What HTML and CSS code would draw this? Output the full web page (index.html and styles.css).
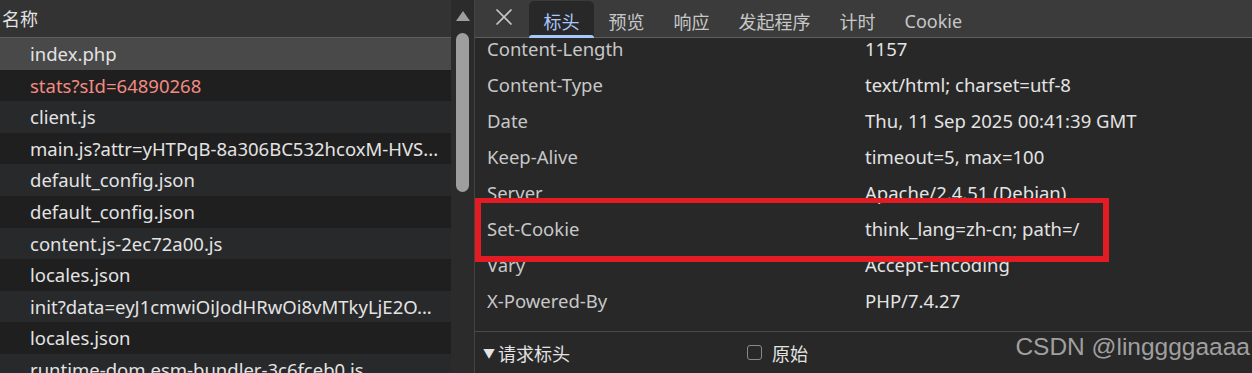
FILE: index.html
```html
<!DOCTYPE html>
<html lang="zh-CN">
<head>
<meta charset="utf-8">
<title>Network</title>
<link rel="stylesheet" href="styles.css">
</head>
<body>
<div class="app">
  <div class="left">
    <div class="list">
      <div class="list-head">名称</div>
      <div class="row selected">index.php</div>
      <div class="row dark error">stats?sId=64890268</div>
      <div class="row light">client.js</div>
      <div class="row dark">main.js?attr=yHTPqB-8a306BC532hcoxM-HVS...</div>
      <div class="row light">default_config.json</div>
      <div class="row dark">default_config.json</div>
      <div class="row light">content.js-2ec72a00.js</div>
      <div class="row dark">locales.json</div>
      <div class="row light">init?data=eyJ1cmwiOiJodHRwOi8vMTkyLjE2O...</div>
      <div class="row dark">locales.json</div>
      <div class="row light">runtime-dom.esm-bundler-3c6fceb0.js</div>
    </div>
    <div class="scrollbar">
      <div class="arrow"></div>
      <div class="thumb"></div>
    </div>
  </div>
  <div class="right">
    <div class="tabbar">
      <div class="close">
        <svg width="18" height="16" viewBox="0 0 18 16"><path d="M1.5 0.5 L16.5 15.5 M16.5 0.5 L1.5 15.5" stroke="#c7c7c7" stroke-width="1.6" fill="none"/></svg>
      </div>
      <div class="tab active">标头</div>
      <div class="tab">预览</div>
      <div class="tab">响应</div>
      <div class="tab">发起程序</div>
      <div class="tab">计时</div>
      <div class="tab">Cookie</div>
    </div>
    <div class="headers-view">
      <div class="headers">
        <div class="hrow"><span class="hname">Content-Length</span><span class="hval">1157</span></div>
        <div class="hrow"><span class="hname">Content-Type</span><span class="hval">text/html; charset=utf-8</span></div>
        <div class="hrow"><span class="hname">Date</span><span class="hval">Thu, 11 Sep 2025 00:41:39 GMT</span></div>
        <div class="hrow"><span class="hname">Keep-Alive</span><span class="hval">timeout=5, max=100</span></div>
        <div class="hrow"><span class="hname">Server</span><span class="hval">Apache/2.4.51 (Debian)</span></div>
        <div class="hrow"><span class="hname">Set-Cookie</span><span class="hval">think_lang=zh-cn; path=/</span></div>
        <div class="hrow"><span class="hname">Vary</span><span class="hval">Accept-Encoding</span></div>
        <div class="hrow"><span class="hname">X-Powered-By</span><span class="hval">PHP/7.4.27</span></div>
      </div>
    </div>
    <div class="section">
      <div class="section-title"><span class="tri">▼</span>请求标头</div>
      <label class="raw"><span class="checkbox"></span>原始</label>
    </div>
  </div>
</div>
<div class="highlight"></div>
<div class="watermark">CSDN @linggggaaaa</div>
</body>
</html>
```

FILE: styles.css
```css
html, body {
  margin: 0;
  padding: 0;
}
body {
  width: 1252px;
  height: 373px;
  overflow: hidden;
  background: #282828;
  font-family: "Noto Sans", "Noto Sans CJK SC", sans-serif;
  font-size: 18.5px;
  color: #e3e3e3;
  position: relative;
}
.app {
  display: flex;
  height: 373px;
}
.left {
  width: 474px;
  display: flex;
  border-right: 1px solid #444;
  flex-shrink: 0;
}
.list {
  width: 451px;
  overflow: hidden;
}
.list-head {
  height: 37px;
  line-height: 36px;
  padding-left: 2px;
  background: #333333;
  border-bottom: 1px solid #5f5f5f;
  color: #e3e3e3;
  font-family: "Noto Sans CJK SC", sans-serif;
  font-size: 18px;
}
.row {
  height: 31.6px;
  line-height: 31.6px;
  padding-left: 30px;
  white-space: nowrap;
  overflow: hidden;
}
.row.selected { background: #494949; }
.row.dark { background: #1f1f1f; }
.row.light { background: #28292b; }
.row.error { color: #f28b82; }
.scrollbar {
  width: 23px;
  background: #2b2b2b;
  display: flex;
  flex-direction: column;
  align-items: center;
}
.arrow {
  margin-top: 11px;
  width: 0;
  height: 0;
  border-left: 7px solid transparent;
  border-right: 7px solid transparent;
  border-bottom: 10px solid #9e9e9e;
}
.thumb {
  margin-top: 12px;
  width: 13px;
  height: 159px;
  border-radius: 7px;
  background: #9e9e9e;
}
.right {
  flex: 1;
  display: flex;
  flex-direction: column;
  min-width: 0;
}
.tabbar {
  height: 37px;
  background: #3b3b3b;
  border-bottom: 1px solid #5f5f5f;
  display: flex;
  align-items: flex-end;
  font-family: "Noto Sans CJK SC", sans-serif;
  font-size: 18px;
  color: #c7c7c7;
}
.close {
  width: 54px;
  height: 37px;
  display: flex;
  align-items: center;
  justify-content: center;
  padding-left: 4px;
  box-sizing: border-box;
}
.close svg { margin-top: -3px; }
.tab {
  height: 36px;
  line-height: 40px;
  padding: 0 14.5px;
  box-sizing: border-box;
  white-space: nowrap;
}
.tab.active {
  background: #282828;
  color: #a8c7fa;
  border-radius: 5px 5px 0 0;
  position: relative;
}
.tab.active::after {
  content: "";
  position: absolute;
  left: 0;
  right: 0;
  bottom: -1px;
  height: 3px;
  background: #a8c7fa;
  border-radius: 3px 3px 0 0;
}
.tab:last-child { font-family: "Noto Sans", sans-serif; }
.headers-view {
  height: 293px;
  overflow: hidden;
  border-bottom: 1px solid #4a4a4a;
}
.headers {
  margin-top: -8px;
  padding-left: 12px;
}
.hrow {
  height: 36px;
  display: flex;
  align-items: center;
  white-space: nowrap;
}
.hname {
  width: 378px;
  flex-shrink: 0;
  color: #c7c7c7;
}
.hval { color: #e3e3e3; }
.section {
  flex: 1;
  display: flex;
  align-items: center;
  font-family: "Noto Sans CJK SC", sans-serif;
  font-size: 18px;
}
.section-title {
  padding-left: 8px;
  width: 264px;
  display: flex;
  align-items: center;
}
.tri {
  font-size: 12px;
  margin-right: 3px;
}
.raw {
  display: flex;
  align-items: center;
}
.checkbox {
  width: 13px;
  height: 13px;
  border: 1.5px solid #8a8a8a;
  border-radius: 3px;
  margin-right: 10px;
}
.highlight {
  position: absolute;
  left: 475px;
  top: 198px;
  width: 622px;
  height: 53px;
  border: 6px solid #e31c23;
  border-top-width: 5px;
}
.watermark {
  position: absolute;
  right: 2px;
  top: 333px;
  font-family: "Liberation Sans", sans-serif;
  font-size: 24.5px;
  color: rgba(200, 200, 200, 0.75);
}
```
